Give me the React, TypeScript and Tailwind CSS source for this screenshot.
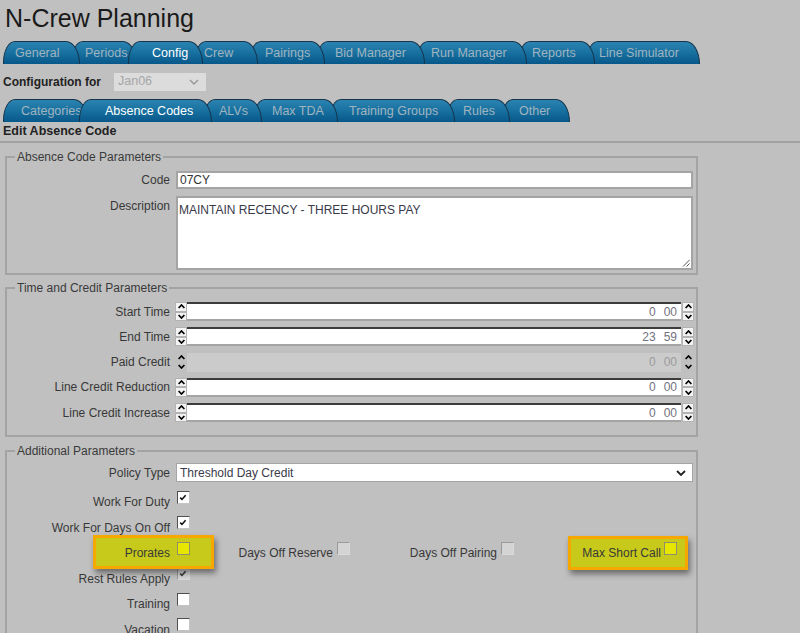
type Tab = { label: string; w: string; pl: string; active?: boolean };

const mainTabs: Tab[] = [
  { label: "General", w: "w-[77px]", pl: "pl-[11px]" },
  { label: "Periods", w: "w-[66px]", pl: "pl-[13px]" },
  { label: "Config", w: "w-[75px]", pl: "pl-[23px]", active: true },
  { label: "Crew", w: "w-[64px]", pl: "pl-[9px]" },
  { label: "Pairings", w: "w-[76px]", pl: "pl-[15px]" },
  { label: "Bid Manager", w: "w-[109px]", pl: "pl-[18px]" },
  { label: "Run Manager", w: "w-[111px]", pl: "pl-[14px]" },
  { label: "Reports", w: "w-[77px]", pl: "pl-[13px]" },
  { label: "Line Simulator", w: "w-[114px]", pl: "pl-[12px]" },
];

const subTabs: Tab[] = [
  { label: "Categories", w: "w-[85px]", pl: "pl-[17px]" },
  { label: "Absence Codes", w: "w-[133px]", pl: "pl-[25px]", active: true },
  { label: "ALVs", w: "w-[59px]", pl: "pl-[15px]" },
  { label: "Max TDA", w: "w-[85px]", pl: "pl-[18px]" },
  { label: "Training Groups", w: "w-[126px]", pl: "pl-[19px]" },
  { label: "Rules", w: "w-[64px]", pl: "pl-[16px]" },
  { label: "Other", w: "w-[69px]", pl: "pl-[17px]" },
];

function TabBar({ tabs }: { tabs: Tab[] }) {
  return (
    <div className="flex h-[23px] pl-[3px]">
      {tabs.map((t, i) => (
        <div
          key={t.label}
          style={{ zIndex: t.active ? 40 : tabs.length - i }}
          className={`relative flex h-full shrink-0 items-center rounded-tl-[12px_21px] rounded-tr-[14px_23px] border border-b-0 border-[#17344a] bg-linear-to-b from-[#2b83b1] via-[#17709f] to-[#07588a] text-[12.5px] leading-none ${t.w} ${t.pl} ${i > 0 ? "-ml-[9px]" : ""} ${t.active ? "text-white" : "text-[#a0b4c0]"}`}
        >
          {t.label}
        </div>
      ))}
    </div>
  );
}

function Caret({ up }: { up?: boolean }) {
  return (
    <svg width="7" height="5" viewBox="0 0 7 5">
      <polyline
        points={up ? "0.6,4 3.5,1 6.4,4" : "0.6,1 3.5,4 6.4,1"}
        fill="none"
        stroke="#000"
        strokeWidth="1.7"
      />
    </svg>
  );
}

function Spin({ disabled }: { disabled?: boolean }) {
  const half = disabled
    ? "flex flex-1 items-center justify-center"
    : "flex flex-1 items-center justify-center border border-[#b3b3b3] bg-[#f3f3f3]";
  return (
    <div className="flex h-[19px] w-[12px] shrink-0 flex-col">
      <span className={half}>
        <Caret up />
      </span>
      <span className={half}>
        <Caret />
      </span>
    </div>
  );
}

function TimeRow({ label, h, m, disabled }: { label: string; h: string; m: string; disabled?: boolean }) {
  return (
    <div className="flex h-[19px] items-center">
      <span className="w-[163px] text-right">{label}</span>
      <div className="ml-[5px] flex h-full w-[519px]">
        <Spin disabled={disabled} />
        <div
          className={`flex flex-1 items-center justify-end pr-[4px] ${
            disabled
              ? "bg-[#cbcbcb] text-[#9c9c9c]"
              : "border-t-2 border-b-2 border-t-[#3c3c3c] border-b-[#a4a4a4] bg-white text-[#72727e]"
          }`}
        >
          <span>{h}</span>
          <span className="ml-[8px]">{m}</span>
        </div>
        <span className="w-[1px]" />
        <Spin disabled={disabled} />
      </div>
    </div>
  );
}

function Box({ checked, disabled, hl, className = "" }: { checked?: boolean; disabled?: boolean; hl?: boolean; className?: string }) {
  const tone = hl
    ? "border-[#8f8f6a] bg-[#e6e600]"
    : disabled
      ? "border-t-[#9a9a9a] border-l-[#9a9a9a] border-r-[#dadada] border-b-[#dadada] bg-[#d4d4d4]"
      : "border-t-[#505050] border-l-[#505050] border-r-[#c4c4c4] border-b-[#c4c4c4] bg-white";
  return (
    <span className={`relative mb-[10px] flex h-[13px] w-[13px] shrink-0 border ${tone} ${className}`}>
      {checked && (
        <svg width="11" height="11" viewBox="0 0 11 11" className="absolute left-0 top-0">
          <polyline points="2.2,5.6 4,7.4 7.6,3.2" fill="none" stroke={disabled ? "#3a3a3a" : "#111"} strokeWidth="1.6" />
        </svg>
      )}
    </span>
  );
}

function CheckRow({ label, checked, disabled, hl, children, raise }: {
  label: string;
  checked?: boolean;
  disabled?: boolean;
  hl?: boolean;
  children?: React.ReactNode;
  raise?: boolean;
}) {
  return (
    <div className={`relative flex h-[25.5px] items-center ${raise ? "z-10" : ""}`}>
      {hl && (
        <span className="absolute left-[86px] top-[-5.5px] h-[34px] w-[121px] border-[3px] border-[#f6a800] bg-[#c7ca1b] shadow-[2px_4px_6px_rgba(0,0,0,0.45)]" />
      )}
      <span className="relative w-[163px] text-right">{label}</span>
      <Box checked={checked} disabled={disabled} hl={hl} className="ml-[7px]" />
      {children}
    </div>
  );
}

function Legend({ children }: { children: React.ReactNode }) {
  return <legend className="ml-[8px] px-[2px] leading-[14px] text-[#3a3a3a]">{children}</legend>;
}

export default function App() {
  return (
    <div className="h-[633px] w-[800px] overflow-hidden bg-[#c0c0c0] font-['Liberation_Sans',Arial,sans-serif] text-[12px] text-[#383838]">
      <h1 className="h-[41px] pl-[5px] pt-[3px] text-[25px] leading-[30px] text-[#1a1a1a]">N-Crew Planning</h1>
      <TabBar tabs={mainTabs} />

      <div className="flex h-[35px] items-center pl-[3px]">
        <span className="font-bold text-[#222]">Configuration for</span>
        <div className="ml-[13px] flex h-[18px] w-[92px] items-center justify-between bg-[#dcdcdc] pl-[4px] pr-[7px] text-[12.5px] text-[#a6a6a6]">
          Jan06
          <svg width="10" height="6" viewBox="0 0 10 6">
            <polyline points="1,1 5,5 9,1" fill="none" stroke="#9a9a9a" strokeWidth="1.5" />
          </svg>
        </div>
      </div>

      <TabBar tabs={subTabs} />
      <div className="h-[19px] pl-[3px] pt-[1px] text-[12.5px] font-bold leading-[16px] text-[#222]">Edit Absence Code</div>

      <div className="border-t-2 border-[#a2a2a2] px-[5px] pt-[7px]">
        <fieldset className="w-[693px] border-2 border-[#a3a3a3] pb-[3px] pt-[7px]">
          <Legend>Absence Code Parameters</Legend>
          <div className="flex h-[18px] items-center">
            <span className="w-[163px] text-right">Code</span>
            <div className="ml-[6px] flex h-full w-[517px] items-center border-2 border-[#a4a4a4] bg-white pl-[2px] text-[#333]">
              07CY
            </div>
          </div>
          <div className="mt-[7px] flex items-start">
            <span className="w-[163px] pt-[1px] text-right">Description</span>
            <div className="relative ml-[6px] h-[74px] w-[517px] border-2 border-[#a4a4a4] bg-white pl-[1px] pt-[3px] text-[#3a3a4a]">
              MAINTAIN RECENCY - THREE HOURS PAY
              <svg width="8" height="8" viewBox="0 0 8 8" className="absolute bottom-[1px] right-[1px]">
                <line x1="1" y1="7.5" x2="7.5" y2="1" stroke="#555" strokeWidth="1" />
                <line x1="4.5" y1="7.5" x2="7.5" y2="4.5" stroke="#555" strokeWidth="1" />
              </svg>
            </div>
          </div>
        </fieldset>

        <fieldset className="mt-[6px] w-[693px] border-2 border-[#a3a3a3] pb-[13px] pt-[7px]">
          <Legend>Time and Credit Parameters</Legend>
          <div className="flex flex-col gap-[6.25px]">
            <TimeRow label="Start Time" h="0" m="00" />
            <TimeRow label="End Time" h="23" m="59" />
            <TimeRow label="Paid Credit" h="0" m="00" disabled />
            <TimeRow label="Line Credit Reduction" h="0" m="00" />
            <TimeRow label="Line Credit Increase" h="0" m="00" />
          </div>
        </fieldset>

        <fieldset className="mt-[7px] w-[693px] border-2 border-[#a3a3a3] pb-[20px] pt-[5px]">
          <Legend>Additional Parameters</Legend>
          <div className="flex h-[19px] items-center">
            <span className="w-[163px] text-right">Policy Type</span>
            <div className="ml-[6px] flex h-full w-[517px] items-center justify-between border border-[#a4a4a4] bg-white pl-[3px] pr-[6px] text-[#3a3a4a]">
              Threshold Day Credit
              <svg width="10" height="6" viewBox="0 0 10 6">
                <polyline points="1,1 5,5 9,1" fill="none" stroke="#222" strokeWidth="1.8" />
              </svg>
            </div>
          </div>
          <div className="mt-[7.5px] flex flex-col">
            <CheckRow label="Work For Duty" checked />
            <CheckRow label="Work For Days On Off" checked />
            <CheckRow label="Prorates" hl raise>
              <div className="relative flex w-[160px] items-center justify-end">
                <span>Days Off Reserve</span>
                <Box disabled className="ml-[4px]" />
              </div>
              <div className="relative flex w-[164px] items-center justify-end">
                <span>Days Off Pairing</span>
                <Box disabled className="ml-[4px]" />
              </div>
              <div className="relative flex w-[163px] items-center justify-end">
                <span className="absolute left-[54px] top-[-5.5px] h-[34px] w-[120px] border-[3px] border-[#f6a800] bg-[#c7ca1b] shadow-[2px_4px_6px_rgba(0,0,0,0.45)]" />
                <span className="relative">Max Short Call</span>
                <Box hl className="ml-[3px]" />
              </div>
            </CheckRow>
            <CheckRow label="Rest Rules Apply" checked disabled />
            <CheckRow label="Training" />
            <CheckRow label="Vacation" />
          </div>
        </fieldset>
      </div>
    </div>
  );
}
